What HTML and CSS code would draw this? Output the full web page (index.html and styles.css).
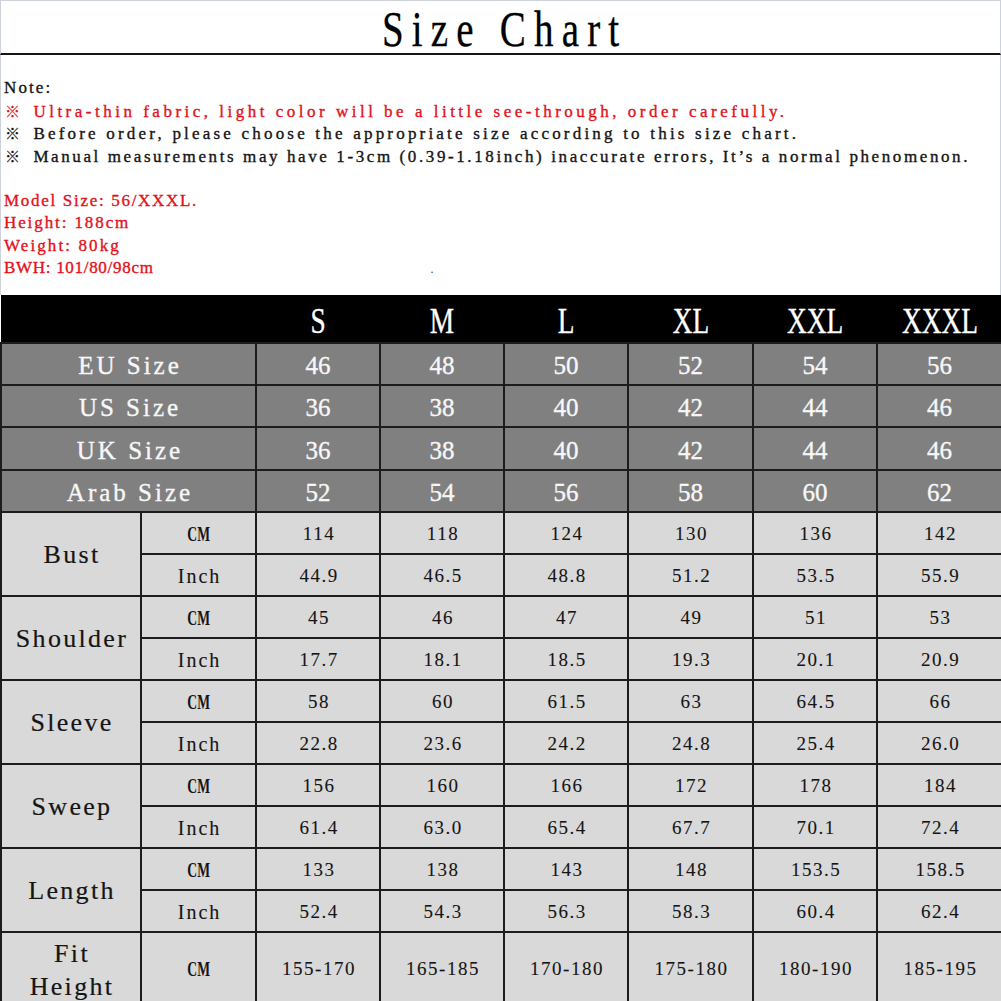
FILE: index.html
```html
<!DOCTYPE html>
<html lang="en">
<head>
<meta charset="utf-8">
<title>Size Chart</title>
<link rel="stylesheet" href="styles.css">
</head>
<body>
<div class="sheet">
  <header class="title-bar">
    <h1 class="title"><span class="title-text">Size Chart</span></h1>
  </header>
  <section class="notes">
    <p class="line l-note">Note:</p>
    <p class="line red l-ultra"><span class="mark">※</span>Ultra-thin fabric, light color will be a little see-through, order carefully.</p>
    <p class="line l-before"><span class="mark">※</span>Before order, please choose the appropriate size according to this size chart.</p>
    <p class="line l-manual"><span class="mark">※</span>Manual measurements may have 1-3cm (0.39-1.18inch) inaccurate errors, It’s a normal phenomenon.</p>
    <p class="line blank">&nbsp;</p>
    <p class="line red l-model">Model Size: 56/XXXL.</p>
    <p class="line red l-height">Height: 188cm</p>
    <p class="line red l-weight">Weight: 80kg</p>
    <p class="line red l-bwh">BWH: 101/80/98cm<span class="speck">.</span></p>
  </section>
  <table class="chart">
    <colgroup>
      <col class="c-name"><col class="c-unit">
      <col class="c-size"><col class="c-size"><col class="c-size">
      <col class="c-size-w"><col class="c-size"><col class="c-size-w">
    </colgroup>
    <thead>
      <tr class="r-head">
        <th colspan="2"></th>
        <th><span class="hd">S</span></th>
        <th><span class="hd">M</span></th>
        <th><span class="hd">L</span></th>
        <th><span class="hd">XL</span></th>
        <th><span class="hd">XXL</span></th>
        <th><span class="hd">XXXL</span></th>
      </tr>
    </thead>
    <tbody>
      <tr class="r-std"><th colspan="2">EU Size</th><td>46</td><td>48</td><td>50</td><td>52</td><td>54</td><td>56</td></tr>
      <tr class="r-std"><th colspan="2">US Size</th><td>36</td><td>38</td><td>40</td><td>42</td><td>44</td><td>46</td></tr>
      <tr class="r-std r-std-tall"><th colspan="2">UK Size</th><td>36</td><td>38</td><td>40</td><td>42</td><td>44</td><td>46</td></tr>
      <tr class="r-std"><th colspan="2">Arab Size</th><td>52</td><td>54</td><td>56</td><td>58</td><td>60</td><td>62</td></tr>

      <tr class="r-m"><th rowspan="2" class="m-name">Bust</th><td class="unit cm"><span class="cm-t">CM</span></td><td>114</td><td>118</td><td>124</td><td>130</td><td>136</td><td>142</td></tr>
      <tr class="r-m"><td class="unit">Inch</td><td>44.9</td><td>46.5</td><td>48.8</td><td>51.2</td><td>53.5</td><td>55.9</td></tr>

      <tr class="r-m"><th rowspan="2" class="m-name">Shoulder</th><td class="unit cm"><span class="cm-t">CM</span></td><td>45</td><td>46</td><td>47</td><td>49</td><td>51</td><td>53</td></tr>
      <tr class="r-m"><td class="unit">Inch</td><td>17.7</td><td>18.1</td><td>18.5</td><td>19.3</td><td>20.1</td><td>20.9</td></tr>

      <tr class="r-m"><th rowspan="2" class="m-name">Sleeve</th><td class="unit cm"><span class="cm-t">CM</span></td><td>58</td><td>60</td><td>61.5</td><td>63</td><td>64.5</td><td>66</td></tr>
      <tr class="r-m"><td class="unit">Inch</td><td>22.8</td><td>23.6</td><td>24.2</td><td>24.8</td><td>25.4</td><td>26.0</td></tr>

      <tr class="r-m"><th rowspan="2" class="m-name">Sweep</th><td class="unit cm"><span class="cm-t">CM</span></td><td>156</td><td>160</td><td>166</td><td>172</td><td>178</td><td>184</td></tr>
      <tr class="r-m"><td class="unit">Inch</td><td>61.4</td><td>63.0</td><td>65.4</td><td>67.7</td><td>70.1</td><td>72.4</td></tr>

      <tr class="r-m"><th rowspan="2" class="m-name">Length</th><td class="unit cm"><span class="cm-t">CM</span></td><td>133</td><td>138</td><td>143</td><td>148</td><td>153.5</td><td>158.5</td></tr>
      <tr class="r-m"><td class="unit">Inch</td><td>52.4</td><td>54.3</td><td>56.3</td><td>58.3</td><td>60.4</td><td>62.4</td></tr>

      <tr class="r-fit"><th class="m-name fit">Fit<br>Height</th><td class="unit cm"><span class="cm-t">CM</span></td><td>155-170</td><td>165-185</td><td>170-180</td><td>175-180</td><td>180-190</td><td>185-195</td></tr>
    </tbody>
  </table>
</div>
</body>
</html>
```

FILE: styles.css
```css
html, body {
  margin: 0;
  padding: 0;
  background: #ffffff;
}

.sheet {
  width: 1001px;
  font-family: "Liberation Serif", "Times New Roman", serif;
  color: #111111;
}

/* ---------- title ---------- */
.title-bar {
  border-top: 1px solid #cdd1da;
  border-left: 1px solid #cdd1da;
  border-right: 1px solid #cdd1da;
  border-bottom: 2px solid #161616;
  height: 52px;
}

.title {
  margin: 0;
  padding-top: 8px;
  height: 44px;
  line-height: 41px;
  text-align: center;
  font-family: "Liberation Serif", "Times New Roman", serif;
  font-weight: normal;
  font-size: 50px;
  color: #000000;
  -webkit-text-stroke: 0.3px #000000;
}

.title-text {
  display: inline-block;
  letter-spacing: 10.5px;
  padding-left: 10.5px;
  transform: scaleX(0.78);
  transform-origin: center;
}

/* ---------- notes ---------- */
.notes {
  border-left: 1px solid #cdd1da;
  border-right: 1px solid #cdd1da;
  padding: 22px 0 15px 3px;
  height: 203px;
}

.line {
  margin: 0;
  height: 22.5px;
  line-height: 22.5px;
  font-size: 17px;
  white-space: nowrap;
  color: #141414;
  -webkit-text-stroke: 0.35px currentColor;
}

.line.red { color: #e3101a; }

.l-note   { letter-spacing: 2.1px; }
.l-ultra  { letter-spacing: 3.5px; }
.l-before { letter-spacing: 3.2px; }
.l-manual { letter-spacing: 2.6px; }
.l-model  { letter-spacing: 1.7px; }
.l-height { letter-spacing: 1.9px; }
.l-weight { letter-spacing: 2.1px; }
.l-bwh    { letter-spacing: 0.7px; }

.speck {
  display: inline-block;
  margin-left: 277px;
  color: #444444;
  font-size: 12px;
  -webkit-text-stroke: 0;
}

.mark {
  display: inline-block;
  width: 29.4px;
  font-family: "Noto Sans CJK SC", "DejaVu Sans", sans-serif;
  font-size: 15px;
  letter-spacing: 0;
  text-align: left;
  padding-left: 1px;
  box-sizing: border-box;
  -webkit-text-stroke: 0.2px currentColor;
}

/* ---------- table ---------- */
.chart {
  width: 1001px;
  border-collapse: collapse;
  table-layout: fixed;
  margin: 0;
}

.c-name { width: 140px; }
.c-unit { width: 115px; }
.c-size { width: 124px; }
.c-size-w { width: 125px; }

.chart th,
.chart td {
  box-sizing: border-box;
  padding: 0;
  text-align: center;
  vertical-align: middle;
  font-weight: normal;
  border: 2px solid #1c1c1c;
  font-family: "Liberation Serif", "Times New Roman", serif;
  -webkit-text-stroke: 0.35px currentColor;
}

/* header row */
.r-head th {
  height: 48px;
  background: #000000;
  color: #ffffff;
  border-top: none;
  border-left: none;
  border-right: none;
  font-size: 36px;
  padding-top: 5px;
}

.hd {
  display: inline-block;
  transform: scaleX(0.76);
}

/* standard size rows (grey) */
.r-std th,
.r-std td {
  height: 42px;
  background: #808080;
  color: #f7f7f7;
  padding-top: 4px;
}

.r-std-tall th,
.r-std-tall td {
  height: 43px;
}

.r-std th {
  font-size: 25px;
  letter-spacing: 3px;
  padding-left: 3px;
}

.r-std td {
  font-size: 25px;
}

/* measurement rows (light) */
.r-m th,
.r-m td,
.r-fit th,
.r-fit td {
  height: 42px;
  background: #d9d9d9;
  color: #151515;
  font-size: 19px;
  letter-spacing: 1.5px;
  padding-top: 2px;
  padding-left: 2px;
  -webkit-text-stroke: 0.1px currentColor;
}

.r-fit th,
.r-fit td {
  height: 68px;
}

.chart .m-name {
  font-size: 26px;
  letter-spacing: 2.3px;
  padding-left: 2px;
  -webkit-text-stroke: 0.2px currentColor;
}

.chart .m-name.fit {
  line-height: 33px;
  padding-top: 4px;
}

.chart .unit {
  font-size: 20px;
  letter-spacing: 2px;
  padding-left: 2px;
}

.chart .unit.cm {
  letter-spacing: 0;
  padding-left: 0;
}

.cm-t {
  display: inline-block;
  font-weight: bold;
  font-size: 20px;
  transform: scaleX(0.68);
  -webkit-text-stroke: 0;
}
```
